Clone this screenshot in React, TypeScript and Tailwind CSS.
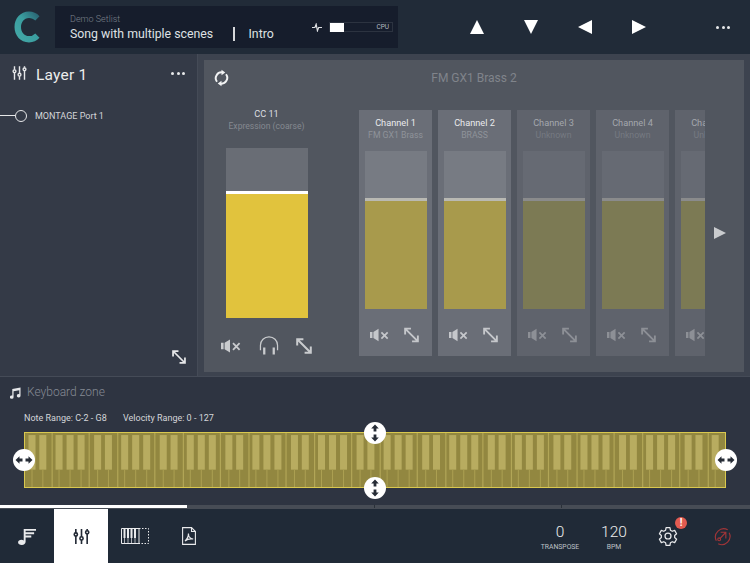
import React from "react";

const font = "[font-family:Roboto,'Liberation_Sans',sans-serif]";

function Sliders({ className = "", color = "currentColor" }: { className?: string; color?: string }) {
  return (
    <svg viewBox="0 0 18 18" className={className} fill="none" stroke={color} strokeWidth="1.7">
      <path d="M3 1v4.200M3 8.600V17M9 1v8.200M9 12.800V17M15 1v1.800M15 6.400V17" />
      <circle cx="3" cy="6.900" r="1.700" />
      <circle cx="9" cy="11" r="1.700" />
      <circle cx="15" cy="4.600" r="1.700" />
    </svg>
  );
}

function Mute({ className = "" }: { className?: string }) {
  return (
    <svg viewBox="0 0 20 14" className={className} fill="currentColor">
      <path d="M0 3.800h2.600v6.400H0zM3.600 3.800 9 .4v13.200L3.600 10.200z" />
      <path d="M12 4.200 18.600 10.800M18.600 4.200 12 10.800" stroke="currentColor" strokeWidth="1.800" fill="none" />
    </svg>
  );
}

function Expand({ className = "" }: { className?: string }) {
  return (
    <svg viewBox="0 0 16 16" className={className} fill="none" stroke="currentColor" strokeWidth="2">
      <path d="M2 2l12 12M1.200 7.400V1.200h6.200M14.800 8.600v6.200H8.600" />
    </svg>
  );
}

function Headphones({ className = "" }: { className?: string }) {
  return (
    <svg viewBox="0 0 20 20" className={className} fill="none" stroke="currentColor" strokeWidth="1.300">
      <path d="M1 15V9.800a9 9 0 0 1 18 0V15" />
      <path d="M5 12v7.400M15 12v7.400" strokeWidth="2.400" />
    </svg>
  );
}

function Refresh({ className = "" }: { className?: string }) {
  return (
    <svg viewBox="0 0 16 18" className={className} fill="none" stroke="currentColor" strokeWidth="2.100">
      <path d="M3.200 13A6.200 6.200 0 0 1 9.200 3.100M12.800 5A6.200 6.200 0 0 1 6.800 14.900" />
      <path d="M8 .2l4 2.900-4 2.900zM8 17.800l-4-2.900 4-2.900z" fill="currentColor" stroke="none" />
    </svg>
  );
}

function Logo() {
  return (
    <svg viewBox="0 0 27 32" className="w-[27px] h-[32px]">
      <defs>
        <linearGradient id="lg" x1="1" y1="0" x2="0" y2="1">
          <stop offset="0" stopColor="#27596a" />
          <stop offset="0.45" stopColor="#3a9d9f" />
          <stop offset="1" stopColor="#45aaa8" />
        </linearGradient>
      </defs>
      <path d="M25.500 5.200A14.500 14.500 0 0 0 15 .6C6.500 .6 .5 7.500 .5 16S6.500 31.400 15 31.400c4.200 0 7.800-1.700 10.500-4.600l-4.200-4.400A8.800 8.800 0 0 1 15 25.100C9.900 25.100 7 20.700 7 16S9.900 6.900 15 6.900c2.500 0 4.600 1 6.300 2.700z" fill="url(#lg)" />
    </svg>
  );
}

function Fader({ w, h, split, bg, knob, fill }: { w: string; h: string; split: string; bg: string; knob: string; fill: string }) {
  return (
    <div className={`flex flex-col ${w} ${h} ${bg}`}>
      <div className={split} />
      <div className={`h-[3px] ${knob}`} />
      <div className={`flex-1 ${fill}`} />
    </div>
  );
}

function Channel({ name, sub, active }: { name: string; sub: string; active: boolean }) {
  return (
    <div className={`w-[73px] shrink-0 h-[246px] flex flex-col items-center ${active ? "bg-[#6a6e77]" : "bg-[#5f636c]"}`}>
      <div className={`mt-[7px] text-[9.200px] leading-[12px] whitespace-nowrap ${active ? "text-[#e9eaec]" : "text-[#a4a7ad]"}`}>{name}</div>
      <div className={`text-[8.700px] leading-[12px] whitespace-nowrap ${active ? "text-[#8f939a]" : "text-[#767a82]"}`}>{sub}</div>
      <div className="mt-[10px]">
        <Fader
          w="w-[62px]"
          h="h-[158px]"
          split="h-[47px]"
          bg={active ? "bg-[#777b83]" : "bg-[#666a73]"}
          knob={active ? "bg-[#b9b9b3]" : "bg-[#8a8b8c]"}
          fill={active ? "bg-[#a89a4c]" : "bg-[#7c7a54]"}
        />
      </div>
      <div className={`mt-[18px] w-[49px] -ml-[2px] flex justify-between items-center ${active ? "text-[#c5c7cb]" : "text-[#8d9096]"}`}>
        <Mute className="w-[19px] h-[14px]" />
        <Expand className="w-[15px] h-[16px]" />
      </div>
    </div>
  );
}

function Keyboard() {
  const octave = (702 / 75) * 7;
  const blackOffsets = [7, 17.800, 34, 45, 56];
  const longOffsets = [26.500, 63.500];
  const items: React.ReactNode[] = [];
  for (let o = 0; o < 11; o++) {
    const x0 = o * octave;
    longOffsets.forEach((off, i) => {
      const x = x0 + off;
      if (x < 700) items.push(<rect key={`l${o}-${i}`} x={x} y={0} width={1.200} height={54} fill="#b2a657" />);
    });
    blackOffsets.forEach((off, i) => {
      const x = x0 + off;
      if (x < 696) {
        items.push(<rect key={`b${o}-${i}`} x={x - 3.500} y={2} width={7} height={34} fill="#b8ac60" />);
        items.push(<rect key={`s${o}-${i}`} x={x - 0.500} y={36} width={1} height={18} fill="#aca052" />);
      }
    });
  }
  return (
    <svg viewBox="0 0 699 53" preserveAspectRatio="none" className="block w-full h-full">
      <rect x="0" y="0" width="702" height="54" fill="#928740" />
      {items}
    </svg>
  );
}

function Handle({ vertical, className }: { vertical?: boolean; className: string }) {
  return (
    <div className={`absolute w-[22px] h-[22px] rounded-full bg-white flex items-center justify-center ${className}`}>
      {vertical ? (
        <svg viewBox="0 0 8 18" className="w-[8px] h-[18px]" fill="#262c36">
          <path d="M4 .5 7.800 4.500H5.400V7.500H2.600V4.500H.2zM4 17.500 .2 13.500H2.600V10.500H5.400V13.500H7.800z" />
        </svg>
      ) : (
        <svg viewBox="0 0 18 8" className="w-[18px] h-[8px]" fill="#262c36">
          <path d="M.5 4 4.500 .2V2.600H7.500V5.400H4.500V7.800zM17.500 4 13.500 7.800V5.400H10.500V2.600H13.500V.2z" />
        </svg>
      )}
    </div>
  );
}

function Tri({ d }: { d: string }) {
  return (
    <svg viewBox="0 0 14 14" className="w-[14px] h-[14px]" fill="white">
      <path d={d} />
    </svg>
  );
}

function Dots() {
  return (
    <>
      <span className="w-[3px] h-[3px] rounded-full bg-[#e8e9eb]" />
      <span className="w-[3px] h-[3px] rounded-full bg-[#e8e9eb]" />
      <span className="w-[3px] h-[3px] rounded-full bg-[#e8e9eb]" />
    </>
  );
}

export default function App() {
  return (
    <div className={`w-[750px] h-[563px] overflow-hidden flex flex-col bg-[#2e3441] ${font}`}>
      {/* Top bar */}
      <div className="h-[54px] shrink-0 bg-[#212b38] flex items-center">
        <div className="w-[55px] shrink-0 flex justify-center">
          <Logo />
        </div>
        <div className="w-[343px] h-[42px] bg-[#161d2c] flex items-center pl-[15px]">
          <div className="flex flex-col w-[232px]">
            <div className="text-[9px] leading-[12px] font-light text-[#7a808b]">Demo Setlist</div>
            <div className="flex items-center text-[12.300px] leading-[16px] text-[#dfe1e4] mt-[1px]">
              <span className="w-[163px] whitespace-nowrap">Song with multiple scenes</span>
              <span className="w-[1.500px] h-[14px] bg-[#d5d7da]" />
              <span className="ml-[14px]">Intro</span>
            </div>
          </div>
          <svg viewBox="0 0 12 10" className="w-[10px] h-[9px] ml-[10px] mr-[7px]" fill="none" stroke="#dfe1e4" strokeWidth="1.400">
            <path d="M0 5h3.500L5 1l1.500 8L8 5h4" />
          </svg>
          <div className="w-[64px] h-[10px] flex items-center justify-between pr-[3px] border border-[#2c3340]">
            <div className="w-[14px] h-[9px] bg-white" />
            <span className="text-[6.500px] leading-[8px] text-[#b8bbc1]">CPU</span>
          </div>
        </div>
        <div className="flex items-center ml-[52px]">
          <div className="w-[54px] flex justify-center"><Tri d="M7 0 14 14H0z" /></div>
          <div className="w-[54px] flex justify-center"><Tri d="M0 0H14L7 14z" /></div>
          <div className="w-[54px] flex justify-center"><Tri d="M14 0V14L0 7z" /></div>
          <div className="w-[54px] flex justify-center"><Tri d="M0 0 14 7 0 14z" /></div>
        </div>
        <div className="ml-[50px] flex gap-[2.500px]">
          <Dots />
        </div>
      </div>

      {/* Main */}
      <div className="h-[323px] shrink-0 flex border-b border-[#454b57]">
        <div className="w-[197px] shrink-0 bg-[#343a47] flex flex-col relative">
          <div className="flex items-center h-[42px] pl-[12px] pr-[12px]">
            <Sliders className="w-[15px] h-[16px] text-[#e6e7e9] -mt-[4px]" />
            <span className="ml-[9px] text-[15.500px] leading-[20px] text-[#eceded] tracking-[0.2px]">Layer 1</span>
            <div className="ml-auto flex gap-[2.500px] -mt-[4px]">
              <Dots />
            </div>
          </div>
          <div className="flex items-center mt-[13px]">
            <div className="w-[15px] h-[1.500px] bg-[#e6e7e9]" />
            <div className="w-[12px] h-[12px] rounded-full border-[1.500px] border-[#e6e7e9]" />
            <span className="ml-[8px] mt-[1px] text-[9px] leading-[12px] text-[#d4d6d9]">MONTAGE Port 1</span>
          </div>
          <Expand className="absolute left-[172px] top-[296px] w-[14px] h-[14px] text-[#e6e7e9]" />
        </div>
        <div className="w-[1px] shrink-0 bg-[#454b57]" />
        <div className="flex-1 bg-[#3d434f] pl-[6px] pr-[6px] pt-[6px]">
          <div className="w-[540px] h-[312px] bg-[#51565f] relative flex">
            <Refresh className="absolute left-[10px] top-[9px] w-[15px] h-[18px] text-[#f1f2f3]" />
            <div className="absolute left-0 right-0 top-[11px] text-center text-[12px] leading-[14px] text-[#80848b]">FM GX1 Brass 2</div>
            <div className="w-[155px] shrink-0 flex flex-col items-center pt-[48px] pr-[30px]">
              <div className="text-[9.200px] leading-[12px] text-[#dcdee0]">CC 11</div>
              <div className="text-[8.600px] leading-[12px] whitespace-nowrap text-[#858990]">Expression (coarse)</div>
              <div className="mt-[16px]">
                <Fader w="w-[82px]" h="h-[170px]" split="h-[43px]" bg="bg-[#696d75]" knob="bg-white" fill="bg-[#e1c33d]" />
              </div>
              <div className="mt-[18px] w-[91px] flex items-center justify-between text-[#c9cbce]">
                <Mute className="w-[20px] h-[14px]" />
                <Headphones className="w-[20px] h-[19px]" />
                <Expand className="w-[16px] h-[16px]" />
              </div>
            </div>
            <div className="flex gap-[6px] mt-[50px] w-[346px] overflow-hidden">
              <Channel name="Channel 1" sub="FM GX1 Brass" active />
              <Channel name="Channel 2" sub="BRASS" active />
              <Channel name="Channel 3" sub="Unknown" active={false} />
              <Channel name="Channel 4" sub="Unknown" active={false} />
              <Channel name="Channel 5" sub="Unknown" active={false} />
            </div>
            <svg viewBox="0 0 12 12" className="absolute left-[510px] top-[167px] w-[12px] h-[12px]" fill="#c9cbce">
              <path d="M0 0 12 6 0 12z" />
            </svg>
          </div>
        </div>
      </div>

      {/* Keyboard zone */}
      <div className="h-[128px] shrink-0 bg-[#2e3441] flex flex-col relative">
        <div className="flex items-center pl-[10px] mt-[8px] h-[15px]">
          <svg viewBox="0 0 12 12" className="w-[11px] h-[12px]" fill="#e6e7e9">
            <path d="M2.500 1.500 11.500 0V9a2 1.800 0 1 1-1.400-1.700V3L3.900 4V10.500a2 1.800 0 1 1-1.400-1.700z" />
          </svg>
          <span className="ml-[6px] text-[12px] leading-[15px] font-light text-[#858a94]">Keyboard zone</span>
        </div>
        <div className="flex pl-[24px] mt-[12px] text-[9px] leading-[12px] text-[#d4d6d9]">
          <span className="w-[99px]">Note Range: C-2 - G8</span>
          <span>Velocity Range: 0 - 127</span>
        </div>
        <div className="ml-[24px] mt-[8px] w-[702px] h-[56px] border-[1.500px] border-[#d9c84f] bg-[#928740] overflow-hidden">
          <Keyboard />
        </div>
        <Handle className="left-[13px] top-[72px]" />
        <Handle className="left-[715px] top-[72px]" />
        <Handle vertical className="left-[364px] top-[45px]" />
        <Handle vertical className="left-[364px] top-[100px]" />
      </div>

      {/* Progress */}
      <div className="h-[4px] shrink-0 bg-[#474c55] relative">
        <div className="h-[3px] w-[187px] bg-white" />
        <div className="absolute left-[374px] top-0 w-[1px] h-[3px] bg-[#2a3038]" />
        <div className="absolute left-[561px] top-0 w-[1px] h-[3px] bg-[#2a3038]" />
      </div>

      {/* Bottom bar */}
      <div className="flex-1 bg-[#202a37] flex items-center text-[#e6e7e9]">
        <div className="w-[54px] h-full flex items-center justify-center">
          <svg viewBox="0 0 20 18" className="w-[19px] h-[17px]" fill="#e9eaec">
            <path d="M6 1h13v2H8v1.500h9v2H8V8h6v2H8v4.500C8 16.500 6.300 18 4 18s-4-1-4-2.800C0 13.400 1.700 12.500 3.500 12.500c1 0 1.800.2 2.500.7z" />
          </svg>
        </div>
        <div className="w-[54px] h-full bg-white flex items-center justify-center">
          <Sliders className="w-[17px] h-[19px] text-[#232a36]" />
        </div>
        <div className="w-[54px] h-full flex items-center justify-center">
          <svg viewBox="0 0 28 16" className="w-[28px] h-[16px]" fill="none" stroke="#e9eaec">
            <path d="M.5.500H18V15.500H.5z" strokeWidth="1" />
            <path d="M3.500 1V10M7 1V10M10.500 1V10M14 1V10" strokeWidth="2" />
            <path d="M3.500 10V15M7 10V15M10.500 10V15M14 10V15" strokeWidth="0.700" />
            <path d="M18 .500H27.500V15.500H18" strokeWidth="1" strokeDasharray="1.500 1.500" />
          </svg>
        </div>
        <div className="w-[54px] h-full flex items-center justify-center">
          <svg viewBox="0 0 14 18" className="w-[14px] h-[18px]" fill="none" stroke="#e9eaec" strokeWidth="1.100">
            <path d="M.6.600H9.500L13.400 4.500V17.400H.6z" />
            <path d="M9.500.600V4.500H13.400" />
            <path d="M3 14C5 12.500 6.800 9 6.400 6.500 6.400 9.500 8.500 11.800 11.200 12 8.500 11.600 5 12.200 3 14z" strokeWidth="1.200" />
          </svg>
        </div>
        <div className="ml-auto flex items-center pr-[1px]">
          <div className="w-[54px] flex flex-col items-center">
            <div className="text-[15.500px] leading-[20px] font-light text-[#eceded] mt-[1px]">0</div>
            <div className="text-[6.800px] leading-[9px] mt-[1px] text-[#bfc2c6]">TRANSPOSE</div>
          </div>
          <div className="w-[54px] flex flex-col items-center">
            <div className="text-[15.500px] leading-[20px] font-light text-[#eceded] mt-[1px]">120</div>
            <div className="text-[6.800px] leading-[9px] mt-[1px] text-[#bfc2c6]">BPM</div>
          </div>
          <div className="w-[54px] flex justify-center relative">
            <svg viewBox="0 0 24 24" className="w-[20px] h-[20px]" fill="none" stroke="#e9eaec" strokeWidth="1.500">
              <path d="M9.700 2h4.600l.6 3 2.200 1.300 2.900-1 2.300 4-2.300 2v2.600l2.300 2-2.300 4-2.900-1-2.200 1.300-.6 3H9.700l-.6-3-2.200-1.300-2.900 1-2.300-4 2.300-2v-2.600l-2.300-2 2.300-4 2.900 1L9.100 5z" strokeLinejoin="round" />
              <circle cx="12" cy="12" r="3.600" />
            </svg>
            <div className="absolute left-[34px] -top-[9px] w-[12px] h-[12px] rounded-full bg-[#e25b50] text-white text-[10px] leading-[12px] font-bold text-center">!</div>
          </div>
          <div className="w-[54px] flex justify-center">
            <svg viewBox="0 0 20 20" className="w-[19px] h-[19px]" fill="none" stroke="#a03538" strokeWidth="1.200">
              <path d="M3.500 14.500A8.700 8.700 0 0 1 15.500 3M17 6a8.700 8.700 0 0 1-11.500 11.700" />
              <path d="M8 5.500h5.500V12M13.300 5.800 7 12.500" />
              <circle cx="6.500" cy="13" r="1.500" />
            </svg>
          </div>
        </div>
      </div>
    </div>
  );
}
